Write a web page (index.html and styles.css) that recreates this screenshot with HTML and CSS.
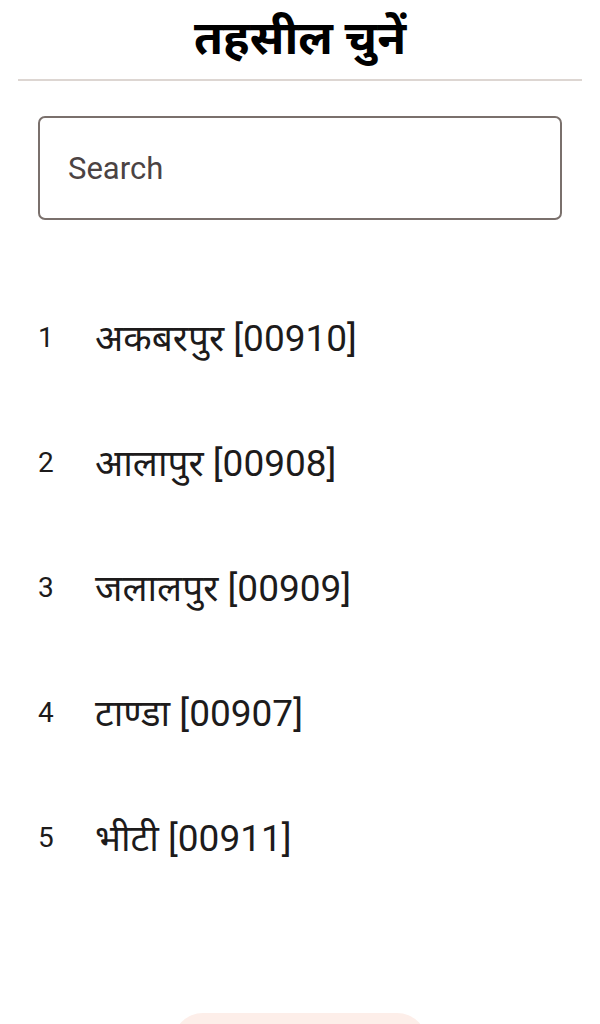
FILE: index.html
```html
<html lang="hi">
<head>
<meta charset="utf-8">
<title>तहसील चुनें</title>
<link rel="stylesheet" href="styles.css">
</head>
<body>
    <div class="header">
        <h1 class="title">तहसील चुनें</h1>
    </div>
    <div class="search-wrap">
        <input class="search" type="text" placeholder="Search">
    </div>
    <ul class="list">
        <li class="item"><span class="num">1</span><span class="name">अकबरपुर [00910]</span></li>
        <li class="item"><span class="num">2</span><span class="name">आलापुर [00908]</span></li>
        <li class="item"><span class="num">3</span><span class="name">जलालपुर [00909]</span></li>
        <li class="item"><span class="num">4</span><span class="name">टाण्डा [00907]</span></li>
        <li class="item"><span class="num">5</span><span class="name">भीटी [00911]</span></li>
    </ul>
    <div class="footer">
        <button class="btn"></button>
    </div>
</body>
</html>
```

FILE: styles.css
```css
/* page */
body{
    margin: 0;
    background: #fff;
    font-family: Roboto, "Noto Sans", sans-serif;
    color: #1d1b1b;
    height: 1024px;
    overflow: hidden;
}
.header{
    margin: 0 18px;
    border-bottom: 2px solid #ddd6d2;
    height: 79px;
    display: flex;
    justify-content: center;
    align-items: center;
}
.title{
    margin: -8px 0 0 0;
    font-size: 47px;
    font-weight: bold;
    color: #000;
}
.search-wrap{
    padding: 35px 38px 0 38px;
}
.search{
    box-sizing: border-box;
    width: 100%;
    height: 104px;
    border: 2px solid #7a706c;
    border-radius: 7px;
    padding: 0 28px;
    font-family: Roboto, sans-serif;
    font-size: 31px;
    outline: none;
}
.search::placeholder{
    color: #4b4343;
}
.list{
    list-style: none;
    margin: 54px 0 0 0;
    padding: 0 0 0 38px;
}
.item{
    height: 125px;
    display: flex;
    align-items: center;
}
.num{
    width: 57px;
    font-size: 28px;
    padding-top: 2px;
}
.name{
    font-size: 37px;
}
.footer{
    display: flex;
    justify-content: center;
    padding-top: 114px;
}
.btn{
    width: 254px;
    height: 60px;
    border: none;
    border-radius: 30px;
    background: #fdeee9;
}
```
